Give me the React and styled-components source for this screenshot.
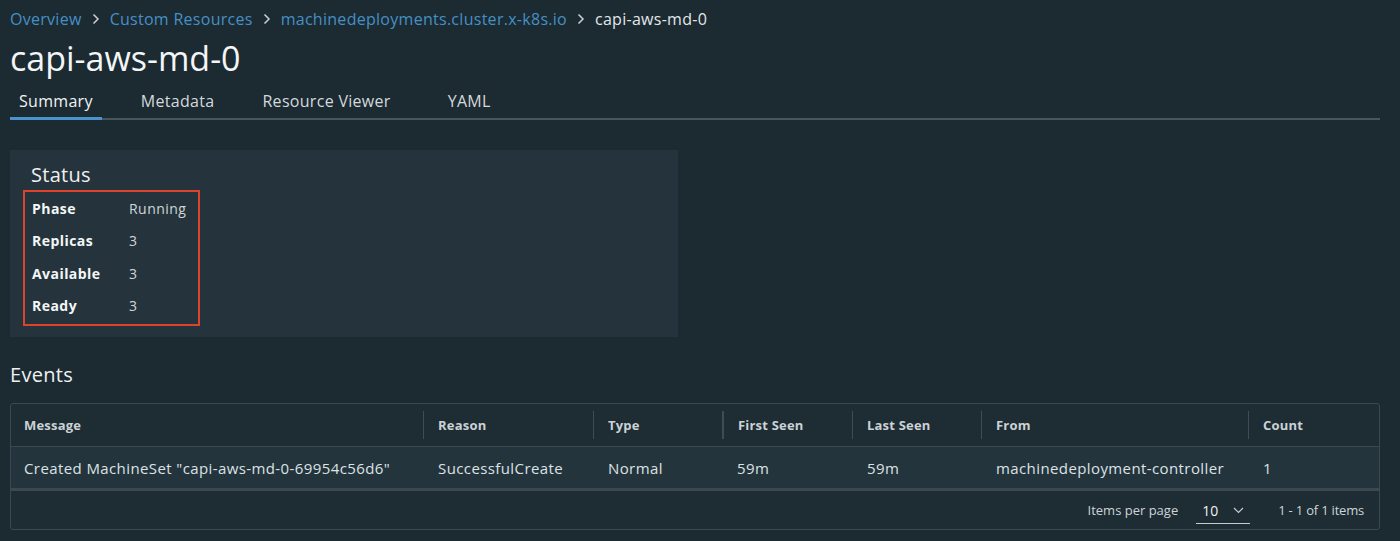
import styled, { createGlobalStyle } from 'styled-components'

const GlobalStyle = createGlobalStyle`
  body {
    margin: 0;
    background: #1c2a32;
    font-family: "Open Sans", "Liberation Sans", sans-serif;
    color: #e8ecee;
  }
`

const Page = styled.div`
  padding: 0 20px 0 10px;
  width: 1400px;
  box-sizing: border-box;
`

const Crumbs = styled.nav`
  display: flex;
  align-items: center;
  height: 38px;
  font-size: 16px;
  letter-spacing: 0.28px;
  gap: 10px;
`

const Crumb = styled.span`
  color: ${p => (p.current ? '#e3e7e9' : '#4690c4')};
`

const Chevron = () => (
  <svg width="8" height="12" viewBox="0 0 8 12">
    <path d="M1.5 1.5 L6 6 L1.5 10.5" fill="none" stroke="#c9d0d4" strokeWidth="1.5" />
  </svg>
)

const Title = styled.h1`
  margin: 0;
  font-size: 34px;
  font-weight: 400;
  line-height: 40px;
  color: #f3f5f6;
`

const Tabs = styled.div`
  display: flex;
  margin-top: 1px;
  border-bottom: 2px solid #48565d;
  height: 41px;
  box-sizing: border-box;
`

const Tab = styled.div`
  font-size: 16px;
  letter-spacing: 0.3px;
  padding: 11px 9px 0;
  margin-right: ${p => p.gap || 30}px;
  color: ${p => (p.active ? '#f1f3f4' : '#d4d9dc')};
  box-shadow: ${p => (p.active ? 'inset 0 -3px 0 #4a93cd' : 'none')};
  margin-bottom: -2px;
`

const Card = styled.section`
  margin-top: 30px;
  width: 668px;
  height: 187px;
  background: #25343c;
  padding: 12px 13px;
  box-sizing: border-box;
`

const CardTitle = styled.h2`
  margin: 0 0 2px 8px;
  font-size: 20px;
  font-weight: 400;
  line-height: 26px;
  letter-spacing: 0.3px;
  color: #eef1f2;
`

const Highlight = styled.div`
  width: 177px;
  border: 2px solid #e0432c;
  padding: 0 0 2px 7px;
  box-sizing: border-box;
`

const StatusRow = styled.div`
  display: grid;
  grid-template-columns: 97px 1fr;
  height: 32.5px;
  align-items: center;
  font-size: 14px;
  letter-spacing: 0.45px;
`

const Label = styled.span`
  font-weight: 700;
  color: #f4f6f7;
`

const Value = styled.span`
  color: #cfd6d9;
`

const SectionTitle = styled.h2`
  margin: 23px 0 0;
  font-size: 20px;
  font-weight: 400;
  line-height: 30px;
  letter-spacing: 0.3px;
  color: #eef1f2;
`

const Table = styled.div`
  margin-top: 13px;
  border: 1px solid #3a4950;
  border-radius: 3px;
  background: #1e2c34;
`

const Cols = '412px 170px 129px 130px 129px 267px 1fr'

const HeadRow = styled.div`
  display: grid;
  grid-template-columns: ${Cols};
  height: 42px;
  align-items: center;
  border-bottom: 1px solid #3a4950;
`

const HeadCell = styled.div`
  font-size: 13px;
  font-weight: 700;
  letter-spacing: 0.2px;
  color: #cbd2d6;
  padding-left: ${p => (p.first ? 13 : 14)}px;
  height: 28px;
  line-height: 28px;
  border-left: ${p => (p.first ? 'none' : `${p.thick ? 2 : 1}px solid #3e4c53`)};
`

const BodyRow = styled.div`
  display: grid;
  grid-template-columns: ${Cols};
  height: 41px;
  align-items: center;
  background: #24343c;
  border-bottom: 3px solid #3a4950;
`

const Cell = styled.div`
  font-size: 15px;
  letter-spacing: 0.4px;
  color: #dce2e5;
  padding-left: ${p => (p.first ? 13 : 15)}px;
  white-space: nowrap;
`

const Footer = styled.div`
  display: flex;
  justify-content: flex-end;
  align-items: center;
  height: 38px;
  padding-right: 15px;
  font-size: 13px;
  color: #cdd4d8;
`

const Range = styled.span`
  letter-spacing: -0.2px;
`

const PageSize = styled.div`
  display: flex;
  align-items: center;
  justify-content: space-between;
  margin: 2px 28px 0 18px;
  width: 54px;
  height: 26px;
  padding: 0 6px;
  box-sizing: border-box;
  border-bottom: 1px solid #c5ccd0;
  color: #eef1f2;
  font-size: 14px;
`

const events = [
  ['Created MachineSet "capi-aws-md-0-69954c56d6"', 'SuccessfulCreate', 'Normal', '59m', '59m', 'machinedeployment-controller', '1'],
]

const headers = ['Message', 'Reason', 'Type', 'First Seen', 'Last Seen', 'From', 'Count']

export default function App() {
  return (
    <Page>
      <GlobalStyle />
      <Crumbs>
        <Crumb>Overview</Crumb>
        <Chevron />
        <Crumb>Custom Resources</Crumb>
        <Chevron />
        <Crumb>machinedeployments.cluster.x-k8s.io</Crumb>
        <Chevron />
        <Crumb current>capi-aws-md-0</Crumb>
      </Crumbs>
      <Title>capi-aws-md-0</Title>
      <Tabs>
        <Tab active>Summary</Tab>
        <Tab>Metadata</Tab>
        <Tab gap={39}>Resource Viewer</Tab>
        <Tab>YAML</Tab>
      </Tabs>

      <Card>
        <CardTitle>Status</CardTitle>
        <Highlight>
          <StatusRow><Label>Phase</Label><Value>Running</Value></StatusRow>
          <StatusRow><Label>Replicas</Label><Value>3</Value></StatusRow>
          <StatusRow><Label>Available</Label><Value>3</Value></StatusRow>
          <StatusRow><Label>Ready</Label><Value>3</Value></StatusRow>
        </Highlight>
      </Card>

      <SectionTitle>Events</SectionTitle>
      <Table>
        <HeadRow>
          {headers.map((h, i) => (
            <HeadCell key={h} first={i === 0} thick={i === 3}>{h}</HeadCell>
          ))}
        </HeadRow>
        {events.map((row, r) => (
          <BodyRow key={r}>
            {row.map((c, i) => <Cell key={i} first={i === 0}>{c}</Cell>)}
          </BodyRow>
        ))}
        <Footer>
          <span>Items per page</span>
          <PageSize>
            <span>10</span>
            <svg width="11" height="7" viewBox="0 0 11 7">
              <path d="M1 1 L5.5 5.5 L10 1" fill="none" stroke="#c5ccd0" strokeWidth="1.2" />
            </svg>
          </PageSize>
          <Range>1 - 1 of 1 items</Range>
        </Footer>
      </Table>
    </Page>
  )
}
